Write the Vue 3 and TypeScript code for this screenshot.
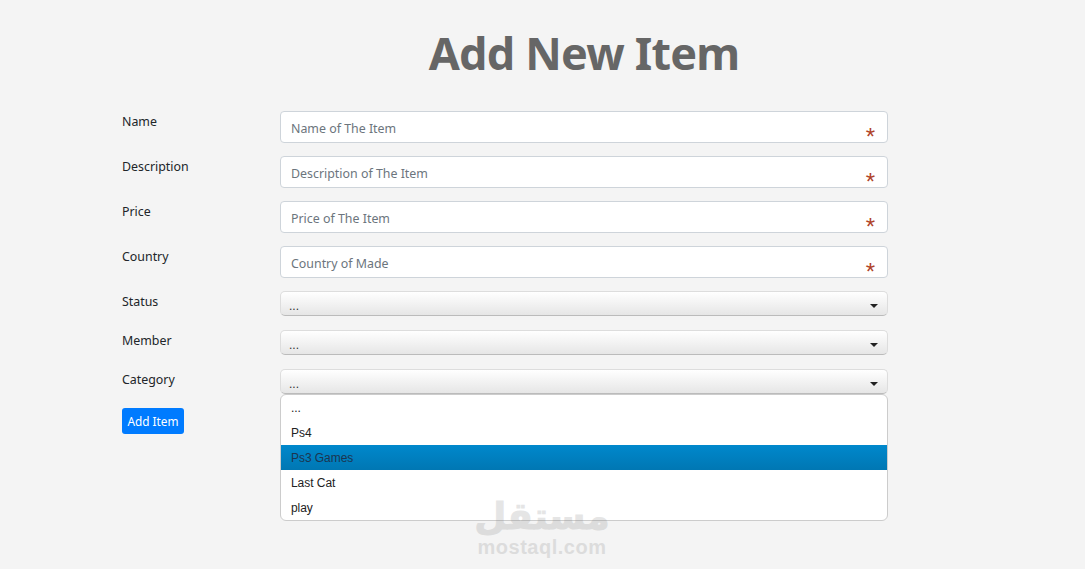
<template>
  <main class="page">
    <h1 class="title">Add New Item</h1>
    <form class="form" @submit.prevent>
      <div v-for="field in textFields" :key="field.label" class="row row--text">
        <label class="label">{{ field.label }}</label>
        <div class="control">
          <input class="input" type="text" :placeholder="field.placeholder" />
          <span class="star">*</span>
        </div>
      </div>
      <div v-for="name in selects" :key="name" class="row row--select">
        <label class="label">{{ name }}</label>
        <div class="control">
          <div class="select">
            <span class="select__text">...</span>
            <span class="select__caret"></span>
          </div>
          <ul v-if="name === 'Category'" class="menu">
            <li
              v-for="option in options"
              :key="option"
              :class="['menu__item', { active: option === 'Ps3 Games' }]"
            >
              {{ option }}
            </li>
          </ul>
        </div>
      </div>
      <button class="submit" type="submit">Add Item</button>
    </form>
    <div class="mark">
      <span class="mark__ar">مستقل</span>
      <span class="mark__en">mostaql.com</span>
    </div>
  </main>
</template>

<script setup lang="ts">
type TTextField = { label: string; placeholder: string };

const textFields: TTextField[] = [
  { label: 'Name', placeholder: 'Name of The Item' },
  { label: 'Description', placeholder: 'Description of The Item' },
  { label: 'Price', placeholder: 'Price of The Item' },
  { label: 'Country', placeholder: 'Country of Made' },
];

const selects: string[] = ['Status', 'Member', 'Category'];
const options: string[] = ['...', 'Ps4', 'Ps3 Games', 'Last Cat', 'play'];
</script>

<style>
html,
body {
  margin: 0;
  background: #f4f4f4;
}
</style>

<style scoped>
* {
  box-sizing: border-box;
}

.page {
  position: relative;
  height: 569px;
  overflow: hidden;
  padding: 18px 0 0 122px;
  font-family: 'Noto Sans', 'Open Sans', sans-serif;
  color: #212529;
}

.title {
  width: 766px;
  margin: 0 0 24px;
  padding-left: 158px;
  text-align: center;
  font-size: 45px;
  line-height: 69px;
  letter-spacing: -0.8px;
  font-weight: 700;
  color: #666666;
}

.form {
  width: 766px;
}

.row {
  display: grid;
  grid-template-columns: 158px 608px;
}

.row--text {
  margin-bottom: 13px;
}

.row--select {
  margin-bottom: 14px;
}

.label {
  padding-top: 1px;
  font-size: 12.4px;
  line-height: 20px;
}

.control {
  position: relative;
}

.input {
  display: block;
  width: 100%;
  height: 32px;
  padding: 2px 10px 0;
  background: #ffffff;
  border: 1px solid #ced4da;
  border-radius: 4px;
  font-family: inherit;
  font-size: 12.4px;
  color: #495057;
}

.input::placeholder {
  color: #6c757d;
  opacity: 1;
}

.star {
  position: absolute;
  right: 13px;
  top: 14px;
  font-family: 'Liberation Sans', Arial, sans-serif;
  font-size: 24px;
  line-height: 24px;
  color: #b0432a;
}

.select {
  display: flex;
  align-items: center;
  justify-content: space-between;
  height: 25px;
  padding: 5px 9px 0 8px;
  background: linear-gradient(#ffffff, #e6e6e6);
  border: 1px solid #dddddd;
  border-bottom-color: #bbbbbb;
  border-radius: 5px;
  font-family: 'Liberation Sans', Arial, sans-serif;
  font-size: 12px;
  color: #333333;
}

.select__caret {
  width: 0;
  height: 0;
  border-left: 4px solid transparent;
  border-right: 4px solid transparent;
  border-top: 4px solid #222222;
}

.menu {
  position: absolute;
  z-index: 1;
  left: 0;
  top: 25px;
  width: 100%;
  margin: 0;
  padding: 0;
  list-style: none;
  background: #ffffff;
  border: 1px solid #cccccc;
  border-radius: 6px;
  font-family: 'Liberation Sans', Arial, sans-serif;
  font-size: 12px;
  letter-spacing: -0.05px;
  color: #222222;
}

.menu__item {
  height: 25px;
  padding: 1px 0 0 10px;
  line-height: 25px;
}

.menu__item.active {
  background: linear-gradient(#0088cc, #0077b3);
  color: #1c3550;
}

.submit {
  display: block;
  width: 62px;
  height: 26px;
  padding: 0;
  border: 0;
  border-radius: 3px;
  background: #007bff;
  color: #ffffff;
  font-family: inherit;
  font-size: 11.8px;
}

.mark {
  position: absolute;
  z-index: 2;
  left: 462px;
  top: 498px;
  width: 160px;
  display: flex;
  flex-direction: column;
  align-items: center;
  color: #808080;
  opacity: 0.2;
  pointer-events: none;
}

.mark__ar {
  font-family: 'DejaVu Sans', sans-serif;
  font-weight: 700;
  font-size: 37px;
  line-height: 38px;
  -webkit-text-stroke: 1px #808080;
}

.mark__en {
  font-family: 'Liberation Sans', Arial, sans-serif;
  font-weight: 700;
  font-size: 20px;
  line-height: 22px;
  letter-spacing: 0.5px;
}
</style>
